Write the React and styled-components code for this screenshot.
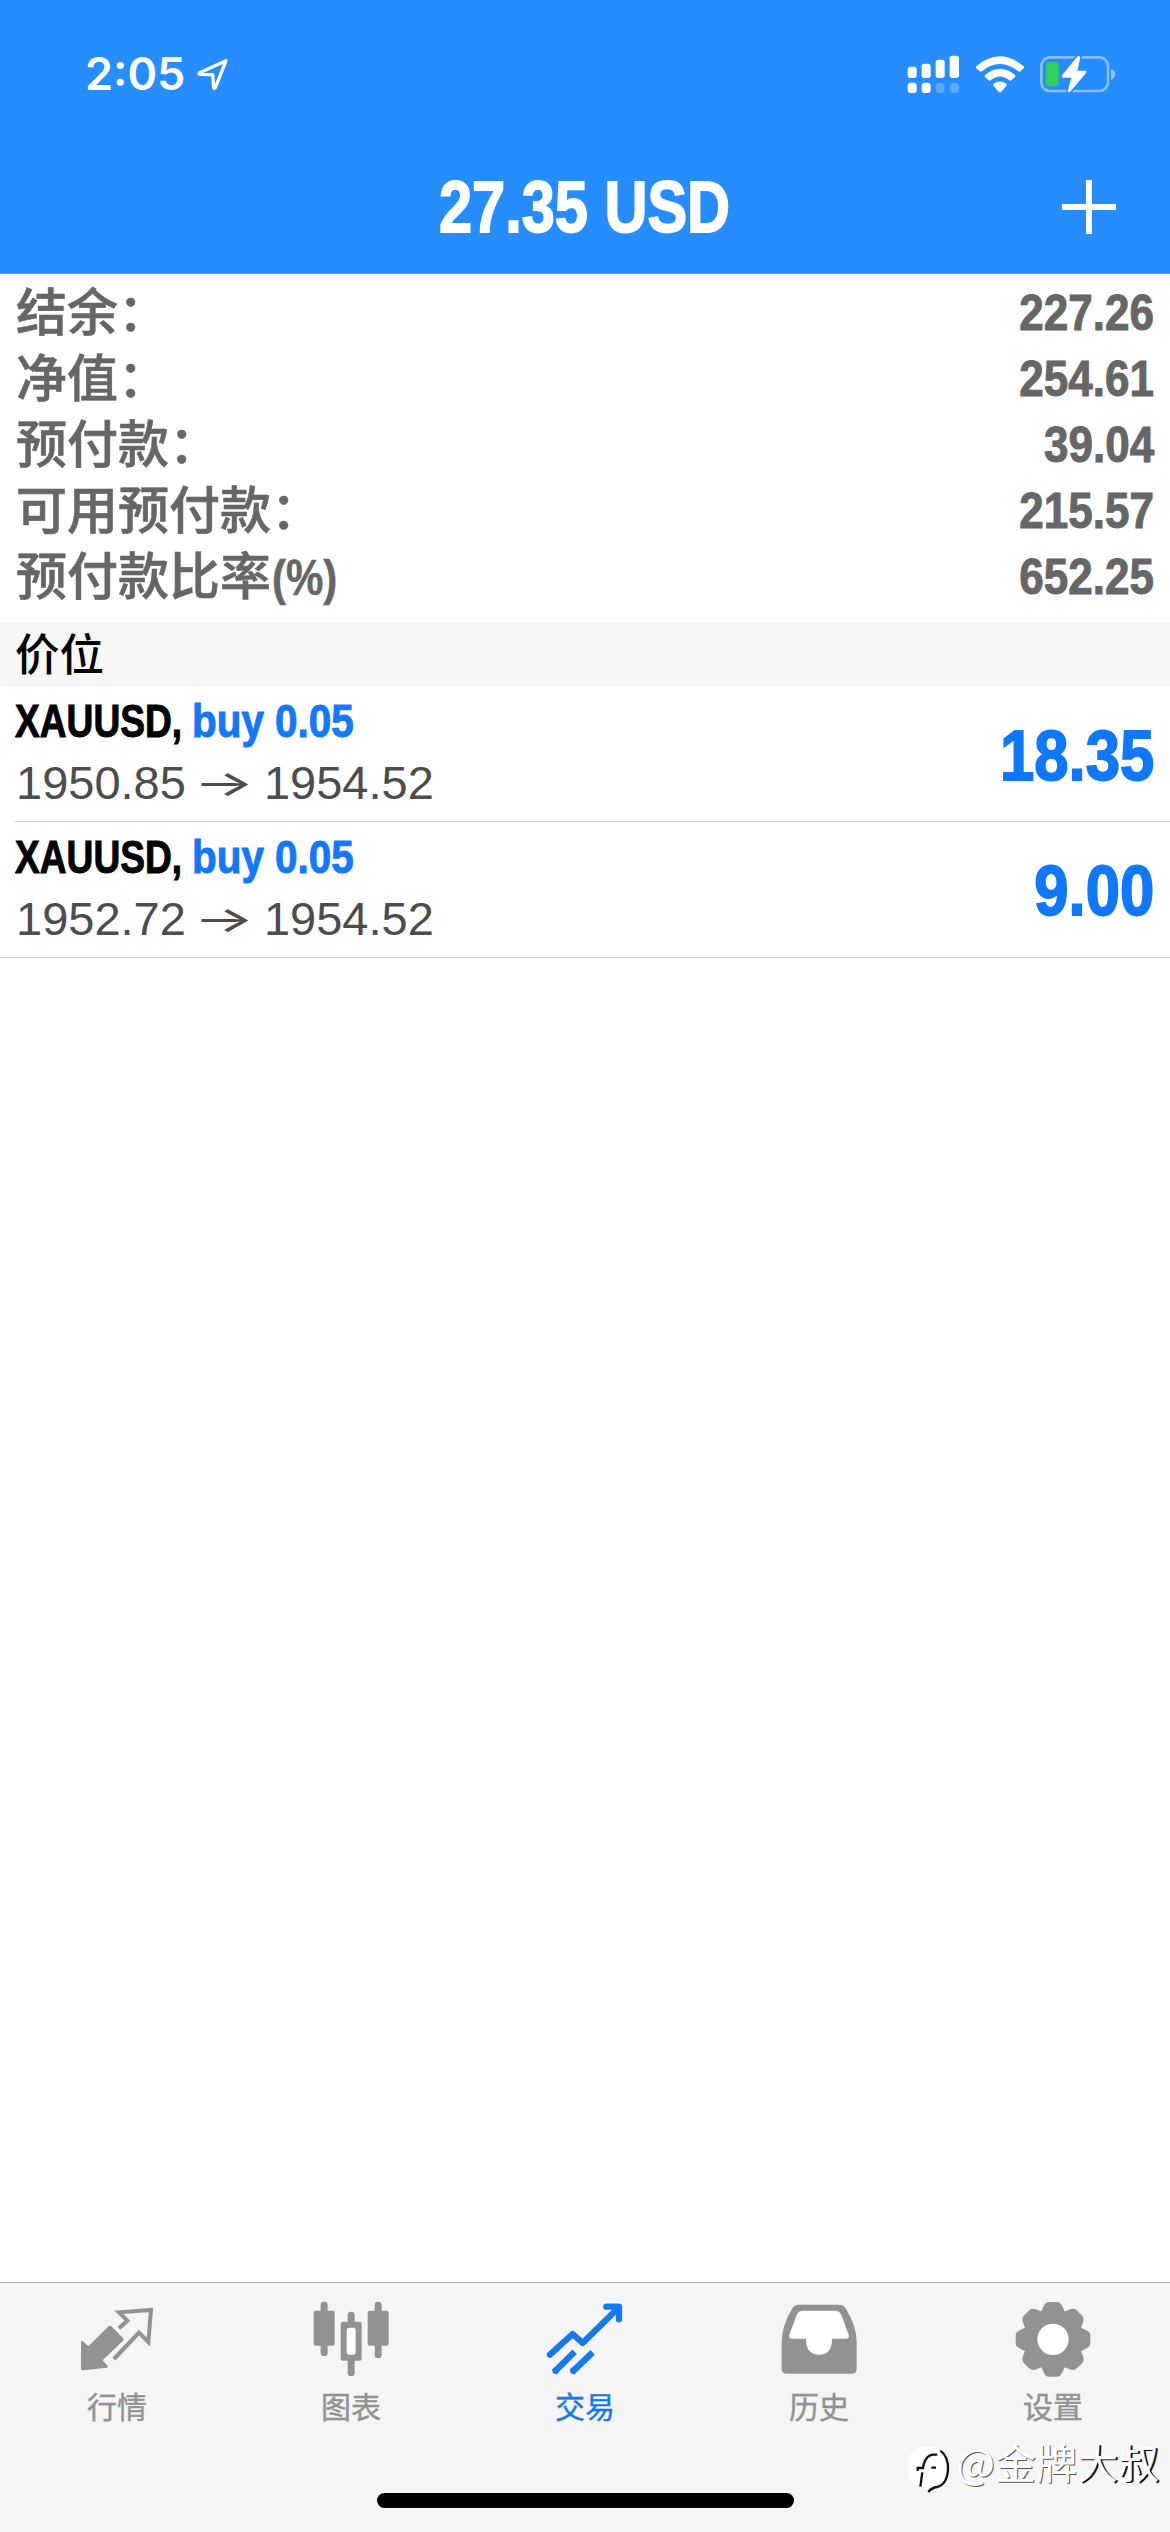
import React from 'react'
import styled, { createGlobalStyle } from 'styled-components'

const GlobalStyle = createGlobalStyle`
    * {
        box-sizing: border-box;
    }
    body {
        margin: 0;
        background: #fff;
    }
`
const cjk = `"Noto Sans CJK SC", sans-serif`

const Screen = styled.div`
    display: flex;
    flex-direction: column;
    width: 1170px;
    height: 2532px;
    overflow: hidden;
    background: #fff;
    font-family: "Liberation Sans", ${cjk};
`
// bold sans squeezed horizontally, stands in for a condensed face
const Condensed = styled.span`
    display: inline-block;
    font-family: "Liberation Sans", sans-serif;
    font-weight: bold;
    white-space: nowrap;
    transform: scaleX(${props => props.$ratio});
    transform-origin: ${props => props.$origin || 'left'} center;
    -webkit-text-stroke: ${props => props.$stroke || 1}px currentColor;
`
const Header = styled.header`
    height: 274px;
    flex: none;
    background: #268dff;
    border-bottom: 1px solid #5b9fe0;
    color: #fff;
`
const StatusBar = styled.div`
    display: flex;
    align-items: center;
    height: 148px;
    padding: 0 54px 0 85px;
`
const Time = styled.div`
    font-family: Inter, sans-serif;
    font-weight: 600;
    font-size: 45px;
    line-height: 60px;
    margin-right: 12px;
`
const StatusIcons = styled.div`
    display: flex;
    align-items: center;
    margin-left: auto;
    gap: 15px;
`
const NavBar = styled.div`
    display: grid;
    grid-template-columns: 160px 1fr 160px;
    align-items: center;
    height: 117px;
`
const Title = styled.h1`
    grid-column: 2;
    margin: 0;
    padding-top: 1px;
    text-align: center;
    font-size: 73px;
    line-height: 80px;
`
const AddButton = styled.button`
    justify-self: end;
    display: flex;
    margin-right: 54px;
    padding: 0;
    border: 0;
    background: none;
`
const Summary = styled.section`
    height: 348px;
    padding: 5px 16px 0;
    color: #666;
`
const SummaryRow = styled.div`
    display: flex;
    justify-content: space-between;
    align-items: flex-start;
    height: 66px;
`
const SummaryLabel = styled.div`
    display: flex;
    font-family: ${cjk};
    font-weight: 500;
    font-size: 51px;
    line-height: 60px;
    -webkit-text-stroke: 0.6px #666;
`
const Percent = styled.span`
    font-size: 50px;
    line-height: 61px;
    margin-left: 1px;
`
const SummaryValue = styled.div`
    font-size: 50px;
    line-height: 68px;
`
const SectionTitle = styled.h2`
    height: 65px;
    margin: 0;
    padding: 0 15px;
    background: #f6f6f6;
    color: #000;
    font-family: ${cjk};
    font-weight: 500;
    font-size: 44.5px;
    line-height: 59px;
`
const PositionList = styled.section`
    flex: 1;
`
const Position = styled.div`
    display: flex;
    justify-content: space-between;
    align-items: center;
    height: ${props => (props.$last ? 136 : 135)}px;
    margin-left: ${props => (props.$last ? 0 : 15)}px;
    padding: 0 16px 4px ${props => (props.$last ? 15 : 0)}px;
    border-bottom: 1px solid #c8c7cc;
`
const Symbol = styled.div`
    display: grid;
    grid-template-columns: 177px auto;
    font-size: 47px;
    line-height: 62px;
    color: #000;
`
const Side = styled(Condensed)`
    color: #1478fa;
`
const Prices = styled.div`
    display: flex;
    align-items: center;
    padding-left: 1px;
    color: #4c4c4c;
    font-size: 47px;
    line-height: 62px;
`
const Arrow = styled.span`
    width: 78px;
    text-align: center;
    font-family: Inter, sans-serif;
    font-weight: 400;
    transform: translateX(-1px) scale(1.36, 0.76);
`
const Profit = styled.div`
    padding-top: 7px;
    font-size: 70px;
    line-height: 80px;
    color: #0f78fc;
`
const TabBar = styled.nav`
    position: relative;
    display: flex;
    flex-direction: column;
    height: 250px;
    flex: none;
    background: #f5f5f5;
    border-top: 1px solid #aaa;
`
const Tabs = styled.div`
    display: grid;
    grid-template-columns: repeat(5, 1fr);
`
const Tab = styled.div`
    display: flex;
    flex-direction: column;
    align-items: center;
    padding-top: 14px;
    color: ${props => (props.$active ? '#1478ee' : '#929292')};
`
const TabLabel = styled.div`
    font-family: ${cjk};
    font-weight: 400;
    font-size: 30px;
    line-height: 44px;
    margin-top: 4px;
    -webkit-text-stroke: 0.4px currentColor;
`
const HomeIndicator = styled.div`
    width: 417px;
    height: 15px;
    margin: auto auto 24px 377px;
    border-radius: 8px;
    background: #000;
`
const Watermark = styled.div`
    position: absolute;
    right: 11px;
    top: 150px;
    display: flex;
    align-items: flex-start;
    color: #fff;
    font-family: ${cjk};
    font-size: 41px;
    line-height: 56px;
    text-shadow: 1px 1px 0 #555;

    svg {
        margin: 12px 3px 0 0;
    }
`
const DarkShadow = styled.span`
    text-shadow: 2px 1px 0 #111;
`

function LocationIcon() {
    return (
        <svg width="32" height="33" viewBox="0 0 96 99" fill="none" stroke="#fff" strokeWidth="10" strokeLinejoin="round">
            <path d="M87 8 L8 44 Q4 48 9 49 L47 50 L50 89 Q53 93 56 87 Z" />
        </svg>
    )
}

function SignalIcon() {
    return (
        <svg width="53" height="38" viewBox="0 0 159 114" fill="#fff">
            <rect x="2" y="35" width="27" height="34" rx="8" />
            <rect x="44" y="26" width="27" height="43" rx="8" />
            <rect x="86" y="14" width="27" height="55" rx="8" />
            <rect x="128" y="2" width="28" height="67" rx="8" />
            <rect x="2" y="83" width="27" height="31" rx="9" />
            <rect x="44" y="83" width="27" height="31" rx="9" />
            <rect x="86" y="83" width="27" height="31" rx="12" opacity="0.25" />
            <rect x="128" y="83" width="28" height="31" rx="12" opacity="0.25" />
        </svg>
    )
}

function WifiIcon() {
    return (
        <svg width="50" height="37" viewBox="0 0 150 111" fill="#fff">
            <path d="M4 31 Q75 -29 146 31 Q149 34 146 37 L136 46 Q133 48 130 46 Q75 2 20 46 Q17 48 14 46 L4 37 Q1 34 4 31Z" />
            <path d="M30 57 Q75 20 120 57 Q123 60 120 63 L109 73 Q106 75 103 73 Q75 50 47 73 Q44 75 41 73 L30 63 Q27 60 30 57Z" />
            <path d="M56 83 Q75 70 94 83 Q97 86 94 90 L79 107 Q75 110 71 107 L56 90 Q53 86 56 83Z" />
        </svg>
    )
}

function BatteryIcon() {
    return (
        <svg width="76" height="38" viewBox="0 0 228 114">
            <rect x="4" y="7" width="200" height="101" rx="26" fill="none" stroke="#fff" strokeOpacity="0.45" strokeWidth="8" />
            <path d="M213 42 Q226 46 226 58 Q226 70 213 74Z" fill="#fff" opacity="0.5" />
            <rect x="18" y="21" width="38" height="73" rx="11" fill="#30d158" />
            <path
                d="M113 4 L66 61 Q63 68 70 68 L94 68 L83 108 Q85 115 92 109 L138 54 Q141 47 134 47 L112 47 L121 8 Q119 1 113 4Z"
                fill="#fff"
                stroke="#268dff"
                strokeWidth="10"
                paintOrder="stroke"
            />
        </svg>
    )
}

function PlusIcon() {
    return (
        <svg width="54" height="54" viewBox="0 0 54 54" stroke="#fff" strokeWidth="6">
            <path d="M27 0V54M0 27H54" />
        </svg>
    )
}

function QuotesIcon() {
    return (
        <svg width="82" height="82" viewBox="0 0 246 246">
            <path
                d="M15 135 Q15 128 21 133 L37 148 L98 88 Q102 84 106 88 L141 123 Q145 127 141 131 L80 190 L95 207 Q98 211 93 212 L22 220 Q15 220 15 213Z"
                fill="currentColor"
            />
            <path d="M129 94 L154 71 L129 46 L225 39 L217 135 L189 107 L114 186" fill="none" stroke="currentColor" strokeWidth="12" />
        </svg>
    )
}

function ChartIcon() {
    return (
        <svg width="82" height="82" viewBox="0 0 246 246" fill="currentColor">
            <rect x="32" y="14" width="21" height="163" rx="10" />
            <rect x="11" y="41" width="63" height="105" rx="6" />
            <rect x="194" y="14" width="21" height="169" rx="10" />
            <rect x="173" y="41" width="63" height="105" rx="6" />
            <rect x="113" y="44" width="21" height="193" rx="10" />
            <rect x="92" y="74" width="63" height="117" rx="6" />
            <rect x="110" y="92" width="27" height="81" rx="8" fill="#fff" />
        </svg>
    )
}

function TradeIcon() {
    return (
        <svg width="82" height="82" viewBox="0 0 246 246" fill="none" stroke="currentColor" strokeWidth="19">
            <g strokeLinecap="round" strokeLinejoin="round">
                <path d="M18 173 L86 111 L116 138 L225 31" />
                <path d="M187 29 H225 V67" />
            </g>
            <path d="M30 226 L92 164" />
            <path d="M83 226 L146 166" />
            <g fill="currentColor" stroke="none">
                <circle cx="35" cy="221" r="9.5" />
                <circle cx="88" cy="221" r="9.5" />
            </g>
        </svg>
    )
}

function HistoryIcon() {
    return (
        <svg width="82" height="82" viewBox="0 0 246 246">
            <path
                d="M63 23 H183 Q197 23 203 34 Q236 88 236 135 V215 Q236 230 221 230 H26 Q11 230 11 215 V135 Q11 88 43 34 Q49 23 63 23Z"
                fill="currentColor"
            />
            <path
                d="M75 41 H171 Q185 41 190 54 L212 113 Q215 125 204 125 H162 Q162 173 124 173 Q84 173 84 125 H42 Q31 125 34 113 L56 54 Q61 41 75 41Z"
                fill="#fff"
            />
        </svg>
    )
}

function SettingsIcon() {
    const teeth = [0, 45, 90, 135, 180, 225, 270, 315]
    return (
        <svg width="82" height="82" viewBox="-123 -123 246 246">
            <g transform="translate(0 4)">
                <circle r="88" fill="currentColor" />
                {teeth.map(angle => (
                    <path
                        key={angle}
                        d="M-42 -76 Q-34 -82 -29 -97 Q-23 -112 -12 -112 H12 Q23 -112 29 -97 Q34 -82 42 -76 L0 -60Z"
                        fill="currentColor"
                        transform={`rotate(${angle})`}
                    />
                ))}
                <circle r="47" fill="#fff" />
            </g>
        </svg>
    )
}

function WatermarkLogo() {
    return (
        <svg width="48" height="52" viewBox="0 0 144 156" fill="none">
            <rect x="8" y="6" width="122" height="122" rx="50" fill="#fff" />
            <path d="M106 17 Q131 35 129 75 Q125 120 96 126 Q80 128 70 141" stroke="#111" strokeWidth="7" />
            <path d="M97 29 H84 Q65 31 57 55 L54 69 H38 V78 M52 82 L46 125 M79 68 H93" stroke="#111" strokeWidth="7" />
        </svg>
    )
}

const summary = [
    { label: '结余：', value: '227.26' },
    { label: '净值：', value: '254.61' },
    { label: '预付款：', value: '39.04' },
    { label: '可用预付款：', value: '215.57' },
    { label: '预付款比率', value: '652.25', unit: '(%)' },
]

const positions = [
    { symbol: 'XAUUSD', side: 'buy 0.05', open: '1950.85', current: '1954.52', profit: '18.35' },
    { symbol: 'XAUUSD', side: 'buy 0.05', open: '1952.72', current: '1954.52', profit: '9.00' },
]

const tabs = [
    { label: '行情', icon: QuotesIcon },
    { label: '图表', icon: ChartIcon },
    { label: '交易', icon: TradeIcon, active: true },
    { label: '历史', icon: HistoryIcon },
    { label: '设置', icon: SettingsIcon },
]

function App() {
    return (
        <Screen>
            <GlobalStyle />
            <Header>
                <StatusBar>
                    <Time>2:05</Time>
                    <LocationIcon />
                    <StatusIcons>
                        <SignalIcon />
                        <WifiIcon />
                        <BatteryIcon />
                    </StatusIcons>
                </StatusBar>
                <NavBar>
                    <Title>
                        <Condensed $ratio={0.815} $origin="center" $stroke={1.8}>27.35 USD</Condensed>
                    </Title>
                    <AddButton aria-label="+">
                        <PlusIcon />
                    </AddButton>
                </NavBar>
            </Header>
            <Summary>
                {summary.map(row => (
                    <SummaryRow key={row.label}>
                        <SummaryLabel>
                            {row.label}
                            {row.unit && (
                                <Percent>
                                    <Condensed $ratio={0.84} $stroke={0.5}>{row.unit}</Condensed>
                                </Percent>
                            )}
                        </SummaryLabel>
                        <SummaryValue>
                            <Condensed $ratio={0.88} $origin="right">{row.value}</Condensed>
                        </SummaryValue>
                    </SummaryRow>
                ))}
            </Summary>
            <SectionTitle>价位</SectionTitle>
            <PositionList>
                {positions.map((item, i) => (
                    <Position key={item.open} $last={i === positions.length - 1}>
                        <div>
                            <Symbol>
                                <Condensed $ratio={0.79}>{item.symbol},</Condensed>
                                <Side $ratio={0.86}>{item.side}</Side>
                            </Symbol>
                            <Prices>
                                {item.open}
                                <Arrow>→</Arrow>
                                {item.current}
                            </Prices>
                        </div>
                        <Profit>
                            <Condensed $ratio={0.88} $origin="right" $stroke={1.8}>{item.profit}</Condensed>
                        </Profit>
                    </Position>
                ))}
            </PositionList>
            <TabBar>
                <Tabs>
                    {tabs.map(({ label, icon: Icon, active }) => (
                        <Tab key={label} $active={active}>
                            <Icon />
                            <TabLabel>{label}</TabLabel>
                        </Tab>
                    ))}
                </Tabs>
                <HomeIndicator />
                <Watermark>
                    <WatermarkLogo />
                    <span>@金牌</span>
                    <DarkShadow>大叔</DarkShadow>
                </Watermark>
            </TabBar>
        </Screen>
    )
}
export default App
